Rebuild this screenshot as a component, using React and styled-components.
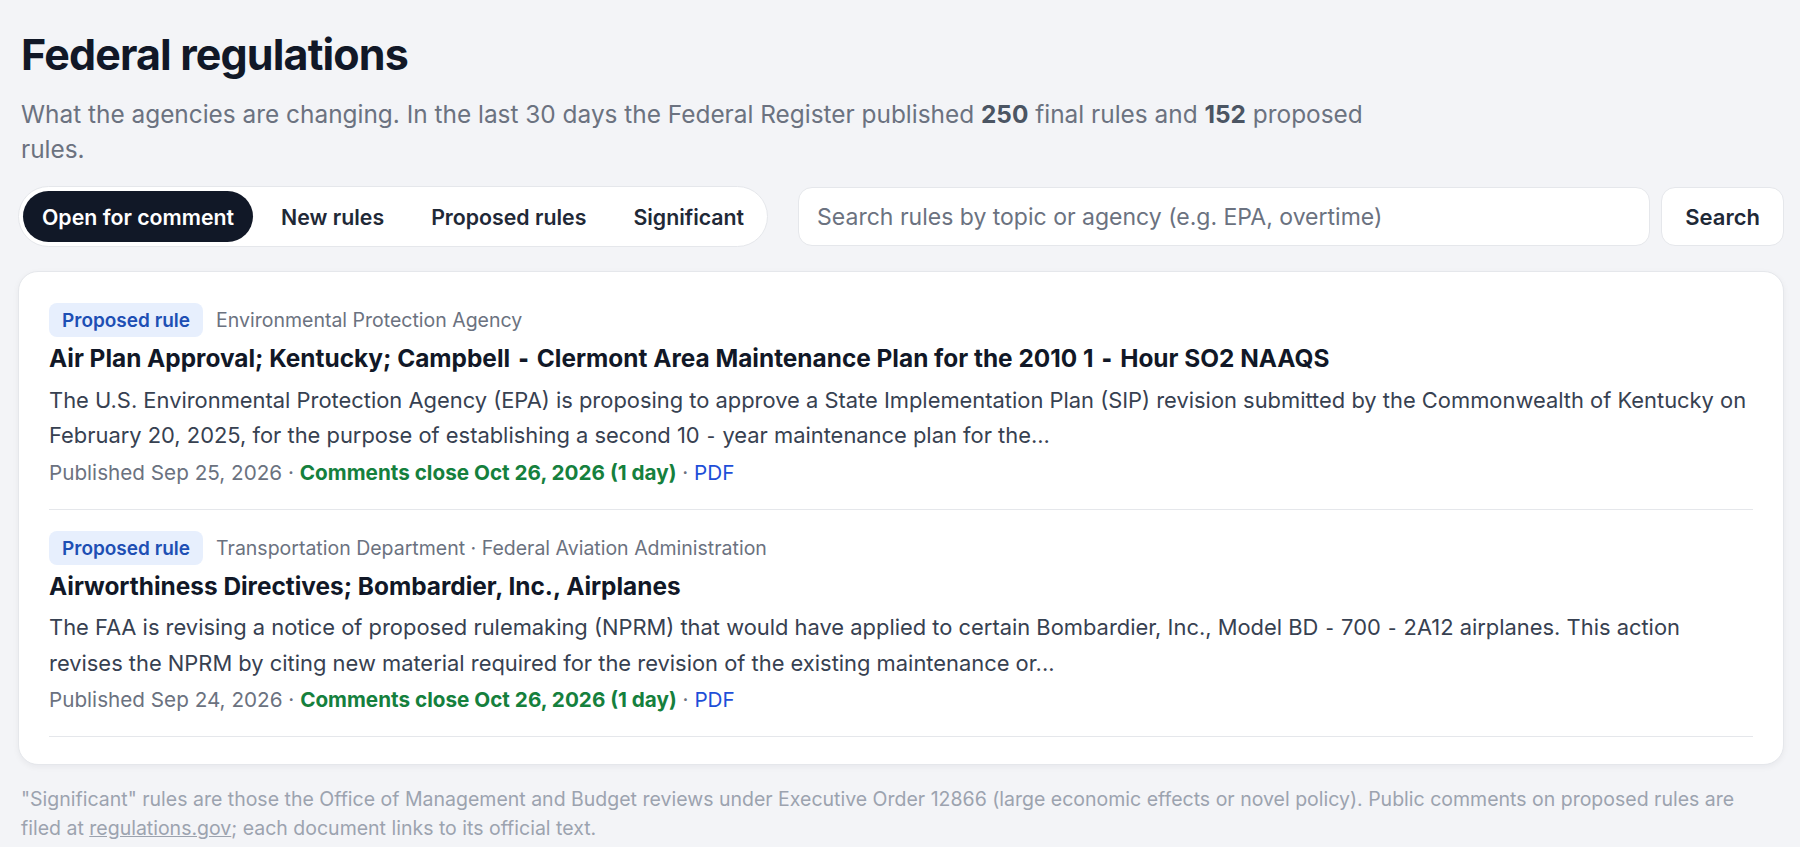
import styled, { createGlobalStyle } from "styled-components";

const GlobalStyle = createGlobalStyle`
    html, body {
        margin: 0;
        padding: 0;
        background: #f3f4f7;
    }
    body {
        font-family: Inter, "Noto Sans", "Liberation Sans", sans-serif;
        color: #111827;
    }
    * {
        box-sizing: border-box;
    }
`;

const Page = styled.main`
    padding: 24px 16px 20px 21px;
`;

const Title = styled.h1`
    margin: 0;
    font-size: 43px;
    line-height: 60px;
    font-weight: 700;
    letter-spacing: -0.02em;
    color: #111827;
`;

const Lead = styled.p`
    margin: 13px 0 0;
    max-width: 1380px;
    font-size: 24.4px;
    line-height: 35px;
    color: #6b7280;

    b {
        color: #4b5563;
        font-weight: 700;
    }
`;

const Toolbar = styled.div`
    display: flex;
    align-items: center;
    margin: 19px 0 24px -3px;
`;

const Tabs = styled.div`
    display: flex;
    gap: 9px;
    padding: 4px;
    background: #fff;
    border: 1px solid #e5e7eb;
    border-radius: 999px;
`;

const Tab = styled.button`
    height: 51px;
    padding: 0 19px;
    border: 0;
    border-radius: 999px;
    font-family: inherit;
    font-size: 21.3px;
    font-weight: 600;
    background: ${(p) => (p.$active ? "#111827" : "transparent")};
    color: ${(p) => (p.$active ? "#fff" : "#1f2937")};
    cursor: pointer;
`;

const SearchInput = styled.input`
    flex: 1;
    height: 59px;
    margin-left: 30px;
    padding: 0 18px;
    border: 1px solid #e5e7eb;
    border-radius: 14px;
    background: #fff;
    font-family: inherit;
    font-size: 23px;
    color: #111827;
    outline: none;

    &::placeholder {
        color: #6b7280;
    }
`;

const SearchButton = styled.button`
    height: 59px;
    margin-left: 11px;
    padding: 0 23px;
    border: 1px solid #e5e7eb;
    border-radius: 14px;
    background: #fff;
    font-family: inherit;
    font-size: 22px;
    font-weight: 600;
    color: #1f2937;
`;

const Card = styled.section`
    margin-left: -3px;
    padding: 10px 30px 27px;
    background: #fff;
    border: 1px solid #e5e7eb;
    border-radius: 20px;
    box-shadow: 0 2px 6px rgba(17, 24, 39, 0.05);
`;

const Item = styled.article`
    padding: 21px 0 22px;
    border-bottom: 1px solid #e5e7eb;
`;

const TagRow = styled.div`
    display: flex;
    align-items: center;
    gap: 13px;
`;

const Badge = styled.span`
    display: inline-flex;
    align-items: center;
    height: 34px;
    padding: 0 13px;
    border-radius: 8px;
    background: #e7effd;
    color: #1e4fb4;
    font-size: 19px;
    font-weight: 600;
`;

const Agency = styled.span`
    font-size: 19.5px;
    color: #6b7280;
`;

const ItemTitle = styled.h2`
    margin: 6px 0 0;
    font-size: 24.4px;
    line-height: 30px;
    font-weight: 700;
    color: #111827;
`;

const Summary = styled.p`
    margin: 9px 0 0;
    font-size: 21.9px;
    line-height: 34.5px;
    color: #374151;
`;

/* the non-breaking hyphen falls back to another face in the source page */
const Hyphen = styled.span`
    font-family: "DejaVu Sans", sans-serif;
    padding: 0 0.34em;
`;

const Meta = styled.div`
    margin-top: 6px;
    font-size: 20.7px;
    line-height: 28px;
    color: #6b7280;
`;

const Closing = styled.span`
    color: #15803d;
    font-weight: 700;
`;

const DocLink = styled.a`
    color: #1d4ed8;
    text-decoration: none;
`;

const Note = styled.p`
    margin: 20px 0 0;
    max-width: 1750px;
    font-size: 19.5px;
    line-height: 28.5px;
    color: #9ca3af;

    a {
        color: inherit;
        text-decoration: underline;
    }
`;

const tabs = ["Open for comment", "New rules", "Proposed rules", "Significant"];

// split on hyphens so they can be drawn like the original's fallback glyph
const withHyphens = (text) =>
    text.split("-").flatMap((part, i) => (i === 0 ? [part] : [<Hyphen key={i}>{"\u2011"}</Hyphen>, part]));

const rules = [
    {
        agency: "Environmental Protection Agency",
        title: "Air Plan Approval; Kentucky; Campbell-Clermont Area Maintenance Plan for the 2010 1-Hour SO2 NAAQS",
        summary:
            "The U.S. Environmental Protection Agency (EPA) is proposing to approve a State Implementation Plan (SIP) revision submitted by the Commonwealth of Kentucky on February 20, 2025, for the purpose of establishing a second 10-year maintenance plan for the...",
        published: "Sep 25, 2026",
    },
    {
        agency: "Transportation Department · Federal Aviation Administration",
        title: "Airworthiness Directives; Bombardier, Inc., Airplanes",
        summary:
            "The FAA is revising a notice of proposed rulemaking (NPRM) that would have applied to certain Bombardier, Inc., Model BD-700-2A12 airplanes. This action revises the NPRM by citing new material required for the revision of the existing maintenance or...",
        published: "Sep 24, 2026",
    },
];

const App = () => {
    return (
        <>
            <GlobalStyle />
            <Page>
                <Title>Federal regulations</Title>
                <Lead>
                    What the agencies are changing. In the last 30 days the Federal Register published <b>250</b> final
                    rules and <b>152</b> proposed rules.
                </Lead>

                <Toolbar>
                    <Tabs>
                        {tabs.map((t, i) => (
                            <Tab key={t} $active={i === 0}>
                                {t}
                            </Tab>
                        ))}
                    </Tabs>
                    <SearchInput placeholder="Search rules by topic or agency (e.g. EPA, overtime)" />
                    <SearchButton>Search</SearchButton>
                </Toolbar>

                <Card>
                    {rules.map((r) => (
                        <Item key={r.title}>
                            <TagRow>
                                <Badge>Proposed rule</Badge>
                                <Agency>{r.agency}</Agency>
                            </TagRow>
                            <ItemTitle>{withHyphens(r.title)}</ItemTitle>
                            <Summary>{withHyphens(r.summary)}</Summary>
                            <Meta>
                                Published {r.published} · <Closing>Comments close Oct 26, 2026 (1 day)</Closing> ·{" "}
                                <DocLink href="#">PDF</DocLink>
                            </Meta>
                        </Item>
                    ))}
                </Card>

                <Note>
                    "Significant" rules are those the Office of Management and Budget reviews under Executive Order
                    12866 (large economic effects or novel policy). Public comments on proposed rules are filed at{" "}
                    <a href="#">regulations.gov</a>; each document links to its official text.
                </Note>
            </Page>
        </>
    );
};

export default App;
